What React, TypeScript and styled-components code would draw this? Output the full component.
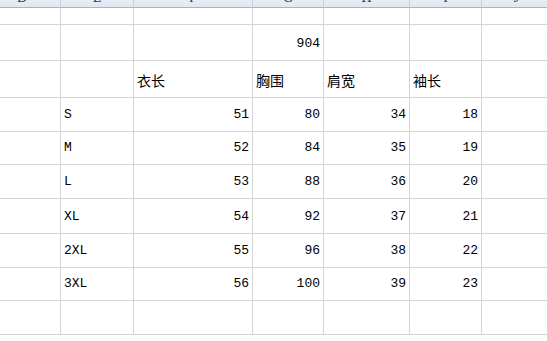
import React from 'react';
import styled, { createGlobalStyle } from 'styled-components';

const GlobalStyle = createGlobalStyle`
  html, body {
    margin: 0;
    padding: 0;
    background: #ffffff;
    overflow: hidden;
  }
`;

const COLUMNS = ['D', 'E', 'F', 'G', 'H', 'I', 'J'];
const COLUMN_WIDTHS = [77, 73, 119, 71, 86, 72, 70];
const ROW_HEIGHTS = [17, 36, 37, 34, 33, 34, 35, 34, 33, 34, 40];

type Cell = { text: string; align?: 'left' | 'right' };

const rows: Cell[][] = [
  [],
  [{ text: '' }, { text: '' }, { text: '' }, { text: '904', align: 'right' }],
  [{ text: '' }, { text: '' }, { text: '衣长' }, { text: '胸围' }, { text: '肩宽' }, { text: '袖长' }],
  ...[
    ['S', '51', '80', '34', '18'],
    ['M', '52', '84', '35', '19'],
    ['L', '53', '88', '36', '20'],
    ['XL', '54', '92', '37', '21'],
    ['2XL', '55', '96', '38', '22'],
    ['3XL', '56', '100', '39', '23'],
  ].map((r) => [
    { text: '' },
    { text: r[0] },
    ...r.slice(1).map((v) => ({ text: v, align: 'right' as const })),
  ]),
  [],
];

const Sheet = styled.div`
  display: grid;
  grid-template-columns: ${COLUMN_WIDTHS.map((w) => `${w}px`).join(' ')};
  margin: -13px 0 0 -16px;
  font-family: 'Liberation Mono', 'Noto Sans CJK SC', monospace;
  font-size: 13px;
  color: #000000;
`;

const HeaderCell = styled.div`
  box-sizing: border-box;
  height: 21px;
  display: flex;
  align-items: flex-end;
  justify-content: center;
  padding-bottom: 1px;
  background: linear-gradient(#f3f6fa, #e1e8f2);
  border-right: 1px solid #c5d1df;
  border-bottom: 1px solid #9eb6ce;
  font-family: 'Liberation Serif', serif;
  font-size: 14px;
  color: #27415f;
`;

const GridCell = styled.div<{ $align: 'left' | 'right'; $height: number }>`
  box-sizing: border-box;
  height: ${(p) => p.$height}px;
  display: flex;
  align-items: flex-end;
  justify-content: ${(p) => (p.$align === 'right' ? 'flex-end' : 'flex-start')};
  padding: 0 3px 9px 3px;
  border-right: 1px solid #d4d4d4;
  border-bottom: 1px solid #d4d4d4;
  white-space: nowrap;
  line-height: 15px;
`;

const Cjk = styled.span`
  font-family: 'Noto Sans CJK SC', sans-serif;
  font-size: 14px;
  line-height: 15px;
`;

const hasCjk = (s: string) => /[\u4e00-\u9fff]/.test(s);

const App = () => (
  <>
    <GlobalStyle />
    <Sheet>
      {COLUMNS.map((c) => (
        <HeaderCell key={c}>{c}</HeaderCell>
      ))}
      {rows.map((row, ri) =>
        COLUMNS.map((c, ci) => {
          const cell = row[ci] || { text: '' };
          return (
            <GridCell key={`${ri}-${c}`} $align={cell.align || 'left'} $height={ROW_HEIGHTS[ri]}>
              {hasCjk(cell.text) ? <Cjk>{cell.text}</Cjk> : cell.text}
            </GridCell>
          );
        }),
      )}
    </Sheet>
  </>
);

export default App;
